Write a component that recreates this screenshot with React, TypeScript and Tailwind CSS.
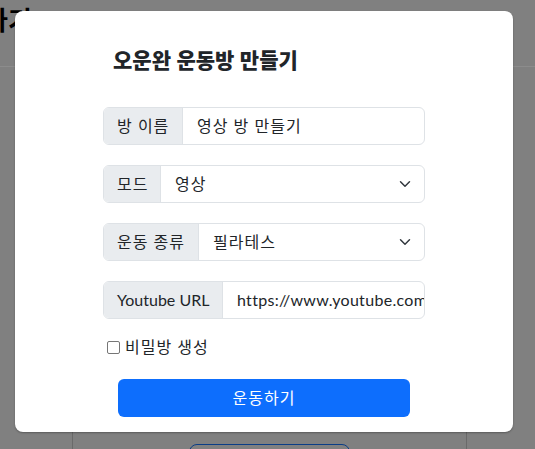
import React from "react";

const font = { fontFamily: '"Open Sans", "Noto Sans CJK KR", sans-serif' };
const latin = { fontFamily: 'Lato, "Open Sans", sans-serif' };

function Chevron() {
  return (
    <svg width="16" height="12" viewBox="0 0 16 16" className="shrink-0">
      <path d="m2 5 6 6 6-6" fill="none" stroke="#343a40" strokeWidth="2" strokeLinecap="round" strokeLinejoin="round" />
    </svg>
  );
}

function Group({ label, w, children }: { label: string; w: string; children: React.ReactNode }) {
  return (
    <div className="flex h-[38px] w-full rounded-[6px] border border-[#dee2e6] overflow-hidden">
      <div className={`flex items-center pl-[13px] bg-[#e9ecef] border-r border-[#dee2e6] text-[16px] text-[#212529] whitespace-nowrap tracking-[1px] shrink-0 ${w}`}>
        {label}
      </div>
      {children}
    </div>
  );
}

export default function App() {
  return (
    <div className="relative w-[535px] h-[449px] overflow-hidden bg-[#808080]" style={font}>
      {/* background page */}
      <div className="h-[67px] border-b border-[#8c8c8c] flex items-start">
        <div className="ml-[-16px] mt-[4px] text-[26px] font-bold text-black leading-[32px]">하기</div>
      </div>
      <div className="ml-[72px] w-[395px] h-[382px] border-x border-[#6a6a6a] flex justify-start">
        <div className="mt-[377px] ml-[116px] w-[161px] h-[40px] rounded-[8px] border border-[#0b3d86]"></div>
      </div>

      {/* modal */}
      <div className="absolute left-[15px] top-[11px] w-[498px] h-[421px] bg-white rounded-[8px] shadow-[0_1px_2px_rgba(0,0,0,0.3)] flex flex-col items-center pt-[34px]">
        <div className="w-[322px]">
          <h2 className="pl-[10px] text-[21px] font-black leading-[30px] text-[#212529]">오운완 운동방 만들기</h2>
          <div className="mt-[32px] flex flex-col gap-[20px]">
            <Group label="방 이름" w="w-[79px]">
              <div className="flex-1 flex items-center pl-[14px] text-[16px] text-[#212529] whitespace-nowrap tracking-[1px]">영상 방 만들기</div>
            </Group>
            <Group label="모드" w="w-[57px]">
              <div className="flex-1 flex items-center pl-[14px] pr-[11px] text-[16px] text-[#212529] tracking-[1px]">
                <span className="flex-1">영상</span>
                <Chevron />
              </div>
            </Group>
            <Group label="운동 종류" w="w-[95px]">
              <div className="flex-1 flex items-center pl-[14px] pr-[11px] text-[16px] text-[#212529] tracking-[1px]">
                <span className="flex-1">필라테스</span>
                <Chevron />
              </div>
            </Group>
            <div className="flex h-[38px] w-full rounded-[6px] border border-[#dee2e6] overflow-hidden">
              <div className="flex items-center pl-[13px] bg-[#e9ecef] border-r border-[#dee2e6] text-[16px] text-[#212529] whitespace-nowrap shrink-0 w-[119px]" style={latin}>
                Youtube URL
              </div>
              <div className="flex-1 flex items-center pl-[14px] text-[16px] text-[#212529] whitespace-nowrap overflow-hidden tracking-[0.3px]" style={latin}>
                https://www.youtube.com/
              </div>
            </div>
          </div>
          <label className="mt-[16px] flex items-center h-[24px] text-[16px] text-[#212529] tracking-[1px]">
            <span className="ml-[4px] mr-[5px] w-[13px] h-[13px] rounded-[2px] border border-[#767676] bg-white"></span>
            비밀방 생성
          </label>
          <div className="mt-[20px] flex justify-center">
            <button className="w-[292px] h-[38px] rounded-[6px] bg-[#0d6efd] text-white text-[16px] tracking-[1px]">운동하기</button>
          </div>
        </div>
      </div>
    </div>
  );
}
